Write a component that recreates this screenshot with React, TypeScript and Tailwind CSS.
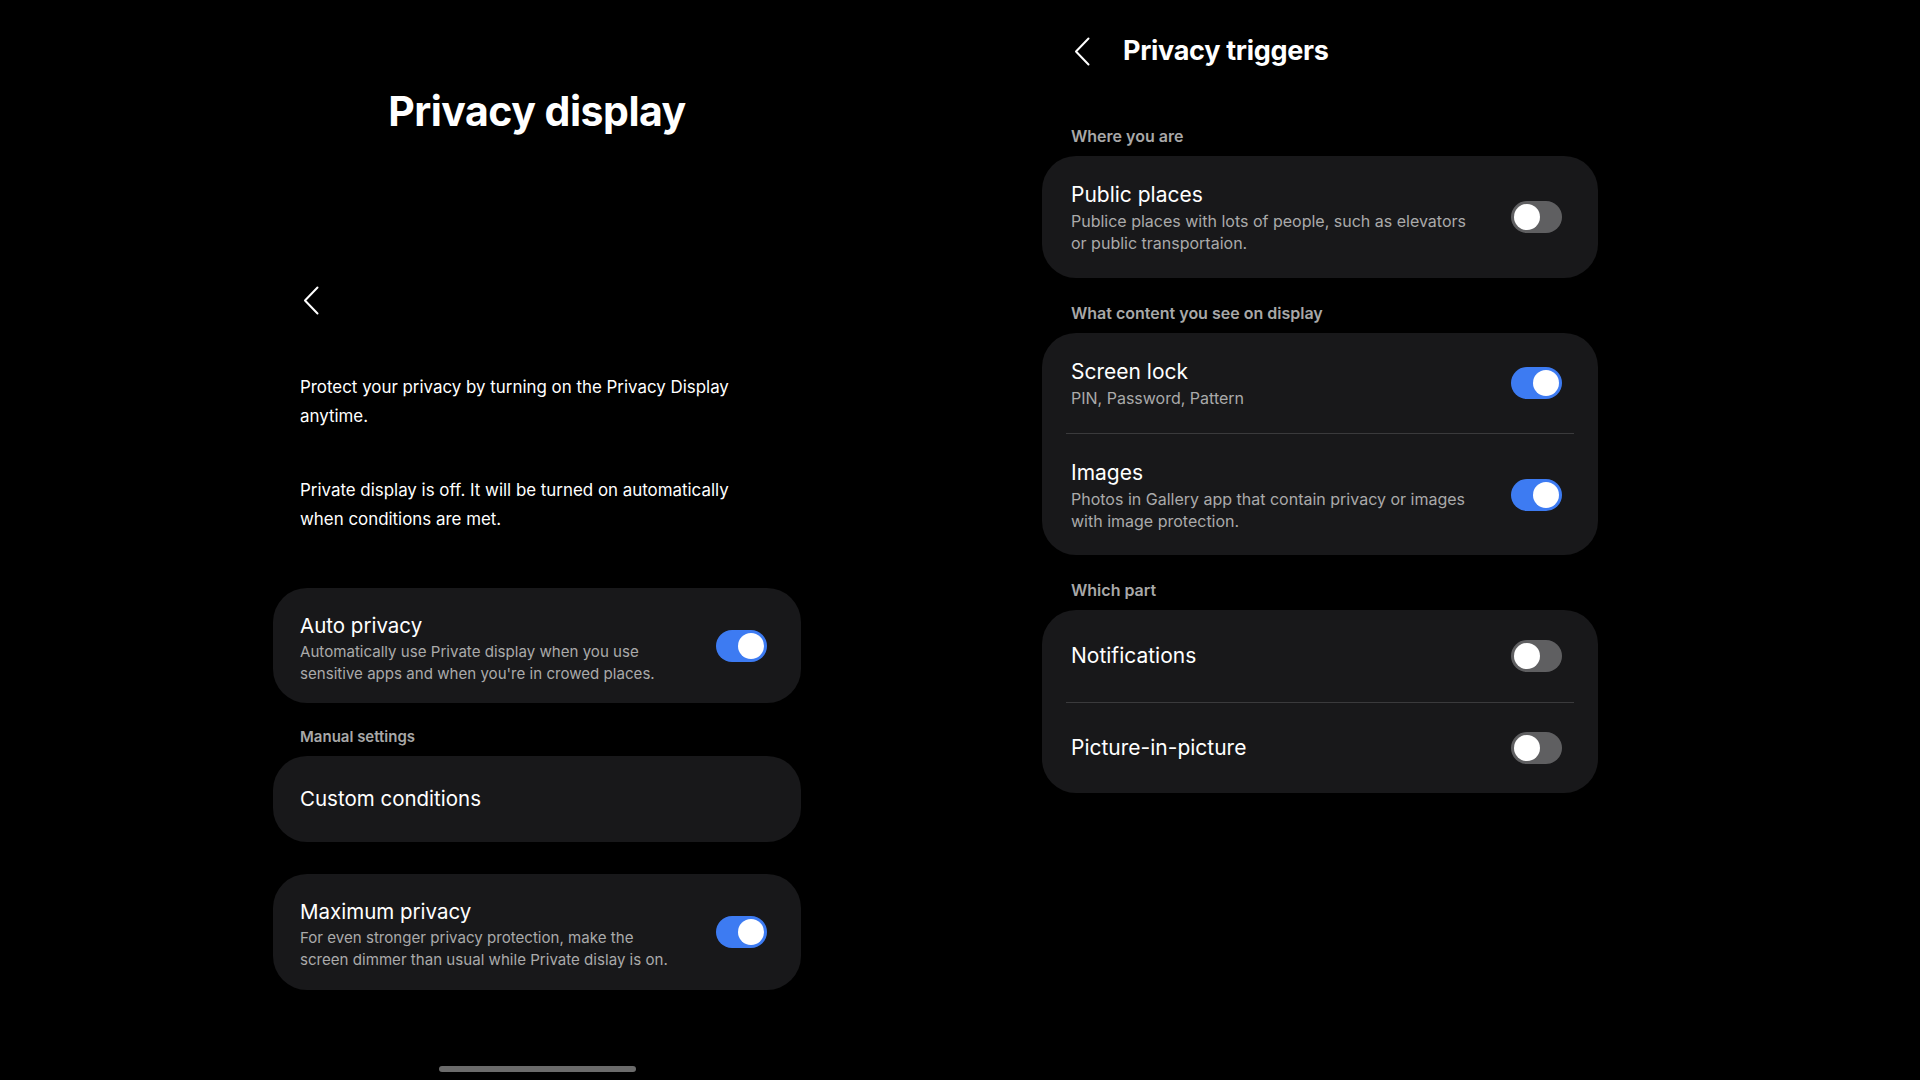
import React from "react";

const FONT = { fontFamily: "Inter, 'Noto Sans', sans-serif" };

function Toggle({ on }: { on: boolean }) {
  return (
    <div
      className={
        on
          ? "w-[51px] h-[32px] rounded-full bg-[#3d7bf2] flex items-center justify-end px-[3px] shrink-0"
          : "w-[51px] h-[32px] rounded-full bg-[#5f5f61] flex items-center justify-start px-[3px] shrink-0"
      }
    >
      <div className="w-[26px] h-[26px] rounded-full bg-white" />
    </div>
  );
}

function Chevron({ className }: { className?: string }) {
  return (
    <svg className={className} width="16" height="29" viewBox="0 0 16 29" fill="none">
      <path d="M14.5 1.5 L2 14.5 L14.5 27.5" stroke="white" strokeWidth="2" strokeLinecap="round" strokeLinejoin="round" />
    </svg>
  );
}

function TextBlock({ title, sub, left }: { title: string; sub?: string[]; left?: boolean }) {
  return (
    <div className={left ? "flex flex-col flex-1 min-w-0 pt-[4px]" : "flex flex-col flex-1 min-w-0"}>
      <div className={left ? "text-[20.5px] leading-[30px] text-white" : "text-[21px] leading-[30px] text-white"}>
        {title}
      </div>
      {sub && (
        <div className={left ? "text-[15.1px] leading-[22px] text-[#aaaaaa]" : "text-[16px] leading-[22px] text-[#aaaaaa]"}>
          {sub.map((s, i) => (
            <div key={i}>{s}</div>
          ))}
        </div>
      )}
    </div>
  );
}

export default function App() {
  return (
    <div className="w-[1920px] h-[1080px] bg-black flex overflow-hidden" style={FONT}>
      {/* Left panel */}
      <div className="ml-[273px] w-[528px] h-[1080px] flex flex-col">
        <h1 className="pt-[91px] text-[41px] leading-[41px] font-bold text-white text-center tracking-[-0.5px]">
          Privacy display
        </h1>
        <Chevron className="mt-[154px] ml-[30px]" />
        <p className="mt-[58px] px-[27px] text-[16.9px] leading-[29px] text-white">
          Protect your privacy by turning on the Privacy Display
          <br />
          anytime.
        </p>
        <p className="mt-[45px] px-[27px] text-[16.9px] leading-[29px] text-white">
          Private display is off. It will be turned on automatically
          <br />
          when conditions are met.
        </p>
        <div className="mt-[54px] h-[115px] rounded-[34px] bg-[#18181a] flex items-center pl-[27px] pr-[34px]">
          <TextBlock
            left
            title="Auto privacy"
            sub={[
              "Automatically use Private display when you use",
              "sensitive apps and when you're in crowed places.",
            ]}
          />
          <Toggle on />
        </div>
        <div className="mt-[24px] pl-[27px] text-[15px] leading-[20px] font-semibold text-[#a8a8a8]">
          Manual settings
        </div>
        <div className="mt-[9px] h-[86px] rounded-[34px] bg-[#18181a] flex items-center pl-[27px]">
          <div className="text-[20.5px] leading-[30px] text-white">Custom conditions</div>
        </div>
        <div className="mt-[32px] h-[116px] rounded-[34px] bg-[#18181a] flex items-center pl-[27px] pr-[34px]">
          <TextBlock
            left
            title="Maximum privacy"
            sub={[
              "For even stronger privacy protection, make the",
              "screen dimmer than usual while Private dislay is on.",
            ]}
          />
          <Toggle on />
        </div>
        <div className="mt-auto mb-[8px] self-center w-[197px] h-[6px] rounded-full bg-[#6b6b6b]" />
      </div>

      {/* Right panel */}
      <div className="ml-[241px] w-[556px] flex flex-col">
        <div className="mt-[30px] h-[42px] flex items-center">
          <Chevron className="ml-[32px]" />
          <div className="ml-[33px] text-[27px] font-bold text-white tracking-[-0.3px]">Privacy triggers</div>
        </div>
        <div className="mt-[54px] pl-[29px] text-[16px] leading-[20px] font-semibold text-[#a8a8a8]">
          Where you are
        </div>
        <div className="mt-[10px] h-[122px] rounded-[34px] bg-[#18181a] flex items-center pl-[29px] pr-[36px]">
          <TextBlock
            title="Public places"
            sub={["Publice places with lots of people, such as elevators", "or public transportaion."]}
          />
          <Toggle on={false} />
        </div>
        <div className="mt-[25px] pl-[29px] text-[16px] leading-[20px] font-semibold text-[#a8a8a8]">
          What content you see on display
        </div>
        <div className="mt-[10px] rounded-[34px] bg-[#18181a] flex flex-col">
          <div className="h-[100px] flex items-center pl-[29px] pr-[36px]">
            <TextBlock title="Screen lock" sub={["PIN, Password, Pattern"]} />
            <Toggle on />
          </div>
          <div className="mx-[24px] h-px bg-[#3a3a3c]" />
          <div className="h-[121px] flex items-center pl-[29px] pr-[36px]">
            <TextBlock
              title="Images"
              sub={["Photos in Gallery app that contain privacy or images", "with image protection."]}
            />
            <Toggle on />
          </div>
        </div>
        <div className="mt-[25px] pl-[29px] text-[16px] leading-[20px] font-semibold text-[#a8a8a8]">
          Which part
        </div>
        <div className="mt-[10px] rounded-[34px] bg-[#18181a] flex flex-col">
          <div className="h-[92px] flex items-center pl-[29px] pr-[36px]">
            <TextBlock title="Notifications" />
            <Toggle on={false} />
          </div>
          <div className="mx-[24px] h-px bg-[#3a3a3c]" />
          <div className="h-[90px] flex items-center pl-[29px] pr-[36px]">
            <TextBlock title="Picture-in-picture" />
            <Toggle on={false} />
          </div>
        </div>
      </div>
    </div>
  );
}
